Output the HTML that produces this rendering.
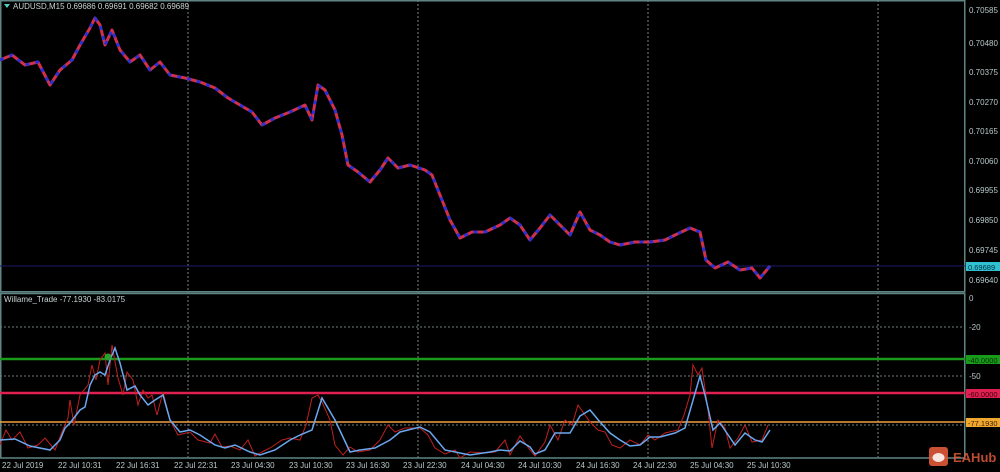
<!DOCTYPE html>
<html><head><meta charset="utf-8"><style>
body{margin:0;background:#000;width:1000px;height:472px;overflow:hidden;font-family:"Liberation Sans",sans-serif;}
svg{display:block}
text{font-family:"Liberation Sans",sans-serif;font-size:8px;fill:#b8c8c8}
</style></head><body>
<svg width="1000" height="472" viewBox="0 0 1000 472">
<rect width="1000" height="472" fill="#000"/>
<g stroke="#9aa" stroke-width="0.8" stroke-dasharray="2,2">
<line x1="188" y1="0" x2="188" y2="458"/><line x1="418" y1="0" x2="418" y2="458"/>
<line x1="648" y1="0" x2="648" y2="458"/><line x1="878" y1="0" x2="878" y2="458"/>
<line x1="0" y1="327" x2="965" y2="327"/><line x1="0" y1="376" x2="965" y2="376"/><line x1="0" y1="425" x2="965" y2="425"/>
</g>
<g stroke="#5f8585" stroke-width="1.5" fill="none">
<rect x="0.75" y="0.75" width="964" height="291"/>
<rect x="0.75" y="293.5" width="964" height="164.5"/>
</g>
<line x1="0" y1="266" x2="965" y2="266" stroke="#1a1a6a" stroke-width="1"/>
<g fill="none" stroke-linejoin="round">
<polyline stroke="#d0304a" stroke-width="3" points="0,60 12,55 25,65 38,62 50,85 60,70 72,60 80,45 90,28 95,18 100,25 105,45 112,30 120,50 130,62 140,55 150,70 160,62 170,75 185,78 200,82 215,88 228,98 240,105 252,112 262,125 275,118 290,112 305,105 312,120 318,85 325,90 335,110 342,135 348,165 358,172 370,182 380,170 388,158 398,168 410,165 425,170 432,175 440,195 450,220 460,238 472,232 485,232 500,225 510,218 520,225 530,240 540,228 550,215 560,225 570,235 580,212 590,230 600,235 610,242 620,245 635,242 650,242 665,240 675,235 690,228 700,232 706,260 715,268 728,262 740,270 752,268 760,278 770,266"/>
<polyline stroke="#3030d0" stroke-width="3" stroke-dasharray="4,6" points="0,60 12,55 25,65 38,62 50,85 60,70 72,60 80,45 90,28 95,18 100,25 105,45 112,30 120,50 130,62 140,55 150,70 160,62 170,75 185,78 200,82 215,88 228,98 240,105 252,112 262,125 275,118 290,112 305,105 312,120 318,85 325,90 335,110 342,135 348,165 358,172 370,182 380,170 388,158 398,168 410,165 425,170 432,175 440,195 450,220 460,238 472,232 485,232 500,225 510,218 520,225 530,240 540,228 550,215 560,225 570,235 580,212 590,230 600,235 610,242 620,245 635,242 650,242 665,240 675,235 690,228 700,232 706,260 715,268 728,262 740,270 752,268 760,278 770,266"/>
</g>
<line x1="0" y1="359" x2="965" y2="359" stroke="#1a9a1a" stroke-width="2.5"/>
<line x1="0" y1="393" x2="965" y2="393" stroke="#e02050" stroke-width="2.5"/>
<line x1="0" y1="422" x2="965" y2="422" stroke="#f0a040" stroke-width="1.5"/>
<polyline fill="none" stroke="#c02020" stroke-width="1" points="0,445 6,430 12,440 20,432 28,448 38,445 45,438 55,450 62,432 68,418 70,400 74,425 80,395 88,385 92,365 96,380 100,360 105,353 108,385 112,345 118,378 123,395 127,372 133,380 138,405 143,390 148,398 152,395 157,415 163,392 170,420 178,435 190,432 198,440 210,443 215,434 222,447 230,446 240,450 248,440 255,456 262,452 270,448 282,440 290,438 300,440 306,425 312,398 318,395 322,402 330,420 335,445 343,455 350,447 358,452 370,450 380,440 388,425 395,432 405,428 420,428 428,435 435,448 445,454 455,450 460,458 470,452 485,453 495,452 505,440 510,455 520,436 530,450 535,456 545,442 550,425 558,440 565,420 572,425 578,405 585,415 590,422 598,430 605,432 612,445 620,448 630,440 640,445 648,435 655,440 665,433 678,430 684,415 690,395 693,365 698,375 702,368 708,410 712,448 718,420 725,428 730,448 738,438 745,425 752,442 762,440 768,425"/>
<polyline fill="none" stroke="#6aa8f0" stroke-width="1.5" points="0,440 15,439 30,446 50,450 60,440 65,428 70,423 80,410 85,407 90,385 95,375 100,372 105,375 110,360 115,348 120,363 127,390 135,386 140,395 148,405 155,400 163,395 170,420 180,432 190,430 200,435 215,445 225,448 235,445 250,452 260,455 275,450 290,440 300,435 312,430 322,398 335,420 350,452 360,450 375,448 390,440 400,432 420,427 430,432 445,450 465,454 470,455 490,452 500,450 510,451 520,441 530,447 535,454 545,450 555,433 570,433 580,416 590,410 600,422 610,433 620,440 630,446 640,445 650,437 660,437 675,433 685,428 700,376 705,395 713,430 720,423 735,445 745,433 755,440 762,442 770,430"/>
<circle cx="108" cy="357" r="3.5" fill="#2aa02a"/>
<polygon points="4,4 10,4 7,8" fill="#4fd0c0"/>
<text x="13" y="9" style="font-size:8px;fill:#c8d4d4">AUDUSD,M15  0.69686 0.69691 0.69682 0.69689</text>
<text x="4" y="302" style="font-size:8px;fill:#c8d4d4">Willame_Trade -77.1930 -83.0175</text>
<g style="font-size:7.5px">
<text x="969" y="13">0.70585</text><text x="969" y="46">0.70480</text><text x="969" y="75">0.70375</text>
<text x="969" y="105">0.70270</text><text x="969" y="134">0.70165</text><text x="969" y="164">0.70060</text>
<text x="969" y="193">0.69955</text><text x="969" y="223">0.69850</text><text x="969" y="253">0.69745</text>
<text x="969" y="283">0.69640</text>
<text x="969" y="301">0</text><text x="969" y="330">-20</text><text x="969" y="379">-50</text>
</g>
<rect x="966" y="262" width="34" height="9" fill="#30c0d0"/><text x="968" y="270" style="font-size:7.5px;fill:#003040">0.69689</text>
<rect x="966" y="355" width="34" height="9" fill="#1a9a1a"/><text x="968" y="363" style="font-size:7.5px;fill:#003000">-40.0000</text>
<rect x="966" y="389" width="34" height="9" fill="#e02050"/><text x="968" y="397" style="font-size:7.5px;fill:#400010">-60.0000</text>
<rect x="966" y="418" width="34" height="9" fill="#f0a830"/><text x="968" y="426" style="font-size:7.5px;fill:#402000">-77.1930</text>
<g style="font-size:8px">
<text x="2" y="468">22 Jul 2019</text><text x="58" y="468">22 Jul 10:31</text><text x="116" y="468">22 Jul 16:31</text>
<text x="174" y="468">22 Jul 22:31</text><text x="231" y="468">23 Jul 04:30</text><text x="289" y="468">23 Jul 10:30</text>
<text x="346" y="468">23 Jul 16:30</text><text x="403" y="468">23 Jul 22:30</text><text x="461" y="468">24 Jul 04:30</text>
<text x="518" y="468">24 Jul 10:30</text><text x="576" y="468">24 Jul 16:30</text><text x="633" y="468">24 Jul 22:30</text>
<text x="690" y="468">25 Jul 04:30</text><text x="747" y="468">25 Jul 10:30</text>
</g>
<rect x="929" y="447" width="19" height="19" rx="3" fill="#e05a3a" opacity="0.9"/>
<ellipse cx="938.5" cy="457.5" rx="6" ry="4.5" fill="#fff" opacity="0.85"/>
<text x="953" y="462" style="font-size:13px;font-weight:bold;fill:#e05a3a;opacity:0.85">EAHub</text>
</svg>
</body></html>
